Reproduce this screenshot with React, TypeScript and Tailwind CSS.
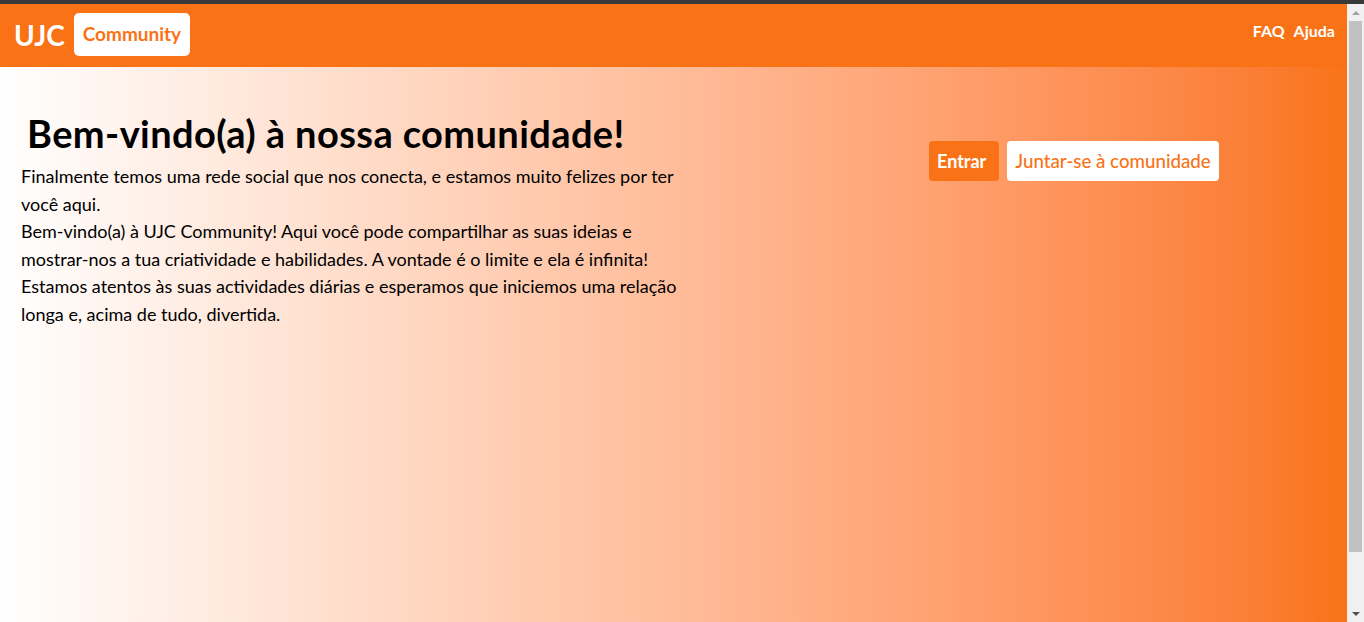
import React from "react";

const Scrollbar = () => (
  <div className="flex w-[17px] flex-col items-center bg-[#f1f1f1]">
    <div className="flex h-[17px] w-full items-center justify-center">
      <div className="h-0 w-0 border-x-[4px] border-b-[4px] border-x-transparent border-b-[#a3a3a3]" />
    </div>
    <div className="h-[531px] w-[13px] bg-[#c1c1c1]" />
    <div className="flex-1" />
    <div className="flex h-[17px] w-full items-center justify-center">
      <div className="h-0 w-0 border-x-[4px] border-t-[4px] border-x-transparent border-t-[#505050]" />
    </div>
  </div>
);

const Header = () => (
  <header className="flex h-[63px] items-center justify-between bg-[#f97316] pl-[14px] pr-[12px]">
    <div className="mb-[2px] flex items-center gap-[9px]">
      <span className="text-[28px] font-bold text-white">UJC</span>
      <span className="rounded-[5px] bg-white px-[9px] py-[7px] text-[19px] font-bold text-[#f97316]">
        Community
      </span>
    </div>
    <nav className="mb-[9px] flex gap-[9px] text-[16px] font-bold text-white">
      <a>FAQ</a>
      <a>Ajuda</a>
    </nav>
  </header>
);

export default function App() {
  return (
    <div className="flex h-[622px] flex-col overflow-hidden font-['Lato',sans-serif]">
      <div className="h-[4px] bg-[#3a3a3a]" />
      <div className="flex flex-1">
        <div className="flex flex-1 flex-col">
          <Header />
          <main className="flex flex-1 bg-gradient-to-r from-white to-[#f97316] pt-[38px]">
            <div className="w-[700px] pl-[21px]">
              <h1 className="ml-[6px] text-[38px] font-bold tracking-[0.4px] text-black">
                Bem-vindo(a) à nossa comunidade!
              </h1>
              <div className="mt-[1px] w-[670px] text-[18px] leading-[27.6px] text-black">
                <p>
                  Finalmente temos uma rede social que nos conecta, e estamos
                  muito felizes por ter você aqui.
                </p>
                <p>
                  Bem-vindo(a) à UJC Community! Aqui você pode compartilhar as
                  suas ideias e mostrar-nos a tua criatividade e habilidades. A
                  vontade é o limite e ela é infinita! Estamos atentos às suas
                  actividades diárias e esperamos que iniciemos uma relação
                  longa e, acima de tudo, divertida.
                </p>
              </div>
            </div>
            <div className="flex gap-[8px] pl-[229px] pt-[36px]">
              <button className="h-[40px] rounded-[4px] bg-[#f97316] pl-[8px] pr-[13px] text-[18px] font-bold text-white">
                Entrar
              </button>
              <button className="h-[40px] rounded-[4px] bg-white px-[8px] text-[18.7px] font-medium text-[#f97316]">
                Juntar-se à comunidade
              </button>
            </div>
          </main>
        </div>
        <Scrollbar />
      </div>
    </div>
  );
}
